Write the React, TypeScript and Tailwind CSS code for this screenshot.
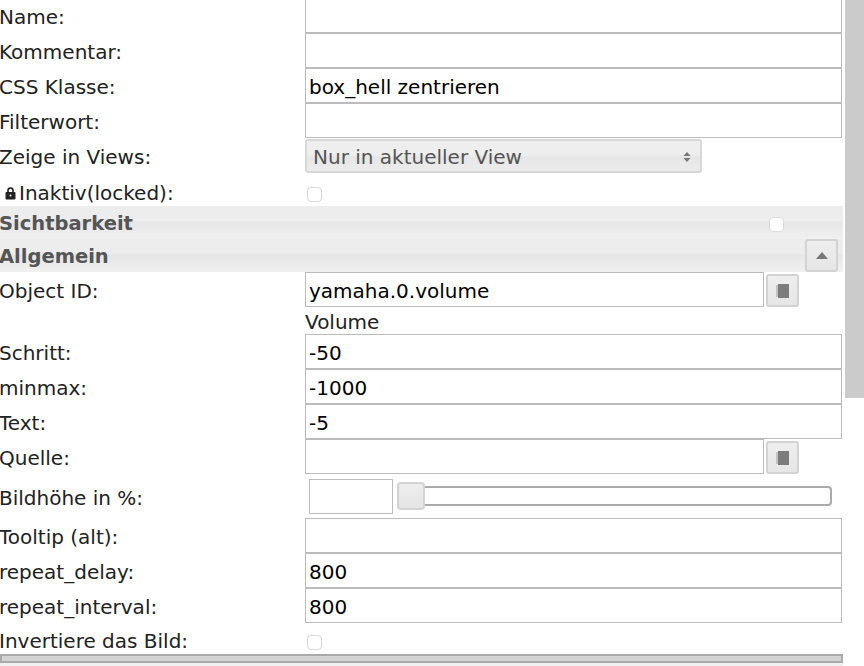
import { ReactNode } from "react";

function TextInput({ value = "", className = "w-[537px]" }: { value?: string; className?: string }) {
  return (
    <input
      readOnly
      value={value}
      className={`h-[35px] border border-[#bcbcbc] bg-white pl-[3px] pr-1 pt-[2px] text-[20px] text-black outline-none ${className}`}
    />
  );
}

function Row({
  label,
  height = "h-[35px]",
  labelClass = "pt-[3px]",
  children,
}: {
  label: ReactNode;
  height?: string;
  labelClass?: string;
  children?: ReactNode;
}) {
  return (
    <div className={`flex items-center ${height}`}>
      <div className={`flex w-[305px] shrink-0 items-center text-[20px] text-[#222] ${labelClass}`}>
        <span className="-ml-[1px] flex items-center">{label}</span>
      </div>
      {children}
    </div>
  );
}

function Checkbox({ className = "" }: { className?: string }) {
  return <span className={`block size-[15px] rounded-[4px] border border-[#d8d8d8] bg-white ${className}`} />;
}

function Header({ title, children }: { title: string; children?: ReactNode }) {
  return (
    <div className="flex h-[33px] w-[843px] items-center justify-between bg-[linear-gradient(#ededed_0%,#ededed_45%,#e6e6e6_48%,#f0f0f0_100%)] text-[19.5px] font-bold text-[#555]">
      <span className="-ml-[1px] pt-[3px]">{title}</span>
      {children}
    </div>
  );
}

function IdButton() {
  return (
    <button className="ml-[2px] mt-[2px] flex size-[33px] items-center justify-center rounded-[3px] border-2 border-[#d3d3d3] bg-[linear-gradient(#eeeeee,#e6e6e6)]">
      <svg width="14" height="16" viewBox="0 0 14 16">
        <path d="M2 1h11v14H2z" fill="#7c7c7c" />
        <path d="M0 3h2M0 5h2M0 7h2M0 9h2M0 11h2M0 13h2" stroke="#9a9a9a" strokeWidth="1" />
      </svg>
    </button>
  );
}

export default function App() {
  return (
    <div className="relative h-[666px] w-[864px] overflow-hidden bg-white [font-family:'DejaVu_Sans',sans-serif]">
      <div className="-mt-[2px] flex flex-col">
        <Row label="Name:"><TextInput /></Row>
        <Row label="Kommentar:"><TextInput /></Row>
        <Row label="CSS Klasse:"><TextInput value="box_hell zentrieren" /></Row>
        <Row label="Filterwort:"><TextInput /></Row>
        <Row label="Zeige in Views:">
          <div className="mt-[1px] flex h-[34px] w-[397px] items-center justify-between rounded-[3px] border-2 border-[#d8d8d8] bg-[linear-gradient(#eeeeee_0%,#eeeeee_45%,#e6e6e6_55%,#ececec_100%)] pl-[6px] pr-[9px] pt-[1px] text-[20px] text-[#555]">
            <span>Nur in aktueller View</span>
            <svg width="8" height="12" viewBox="0 0 8 12" fill="#777">
              <path d="M4 1l3.5 4h-7zM4 11L.5 7h7z" />
            </svg>
          </div>
        </Row>
        <Row
          height="h-[33px]"
          labelClass="pt-[6px]"
          label={
            <>
              <svg className="ml-[6px] mr-[3px]" width="11" height="14" viewBox="0 0 11 14">
                <path d="M3 7V4.5a2.5 2.5 0 0 1 5 0V7" fill="none" stroke="#222" strokeWidth="1.6" />
                <rect x="0.5" y="6" width="10" height="7.5" rx="1" fill="#222" />
                <circle cx="5.5" cy="9.5" r="1" fill="#fff" />
              </svg>
              Inaktiv(locked):
            </>
          }
        >
          <Checkbox className="ml-[2px] mt-[10px]" />
        </Row>
        <Header title="Sichtbarkeit">
          <Checkbox className="mr-[59px] mt-[4px] border-[#dcdcdc]" />
        </Header>
        <Header title="Allgemein">
          <button className="mr-[5px] flex size-[33px] items-center justify-center rounded-[3px] border-2 border-[#d3d3d3] bg-[linear-gradient(#eeeeee,#e6e6e6)]">
            <svg width="12" height="7" viewBox="0 0 12 7" fill="#777">
              <path d="M6 0l6 7H0z" />
            </svg>
          </button>
        </Header>
        <Row label="Object ID:">
          <TextInput value="yamaha.0.volume" className="w-[459px]" />
          <IdButton />
        </Row>
        <div className="flex h-[27px] items-center pl-[305px] pt-[2px] text-[20px] text-[#222]">Volume</div>
        <Row label="Schritt:"><TextInput value="-50" /></Row>
        <Row label="minmax:"><TextInput value="-1000" /></Row>
        <Row label="Text:"><TextInput value="-5" /></Row>
        <Row label="Quelle:">
          <TextInput className="w-[459px]" />
          <IdButton />
        </Row>
        <Row label="Bildhöhe in %:" height="h-[44px]">
          <TextInput className="ml-[4px] w-[84px]" />
          <div className="relative ml-[4px] h-[20px] w-[435px] rounded-[4px] border-2 border-[#aaaaaa] bg-white">
            <span className="absolute -left-[2px] -top-[6px] h-[28px] w-[28px] rounded-[4px] border-2 border-[#d3d3d3] bg-[linear-gradient(#eeeeee,#e4e4e4)]" />
          </div>
        </Row>
        <Row label="Tooltip (alt):"><TextInput /></Row>
        <Row label="repeat_delay:"><TextInput value="800" /></Row>
        <Row label="repeat_interval:"><TextInput value="800" /></Row>
        <Row label="Invertiere das Bild:" height="h-[31px]" labelClass="pt-[5px]">
          <Checkbox className="ml-[2px] mt-[8px]" />
        </Row>
        <div className="h-[9px] w-[843px] border-2 border-[#aaaaaa] bg-[#d3d3d3]" />
        <div className="h-[10px] w-[843px] bg-[#f0f0f0]" />
      </div>
      <div className="absolute right-0 top-0 h-[398px] w-[19px] bg-[#cbcbcb]" />
    </div>
  );
}
